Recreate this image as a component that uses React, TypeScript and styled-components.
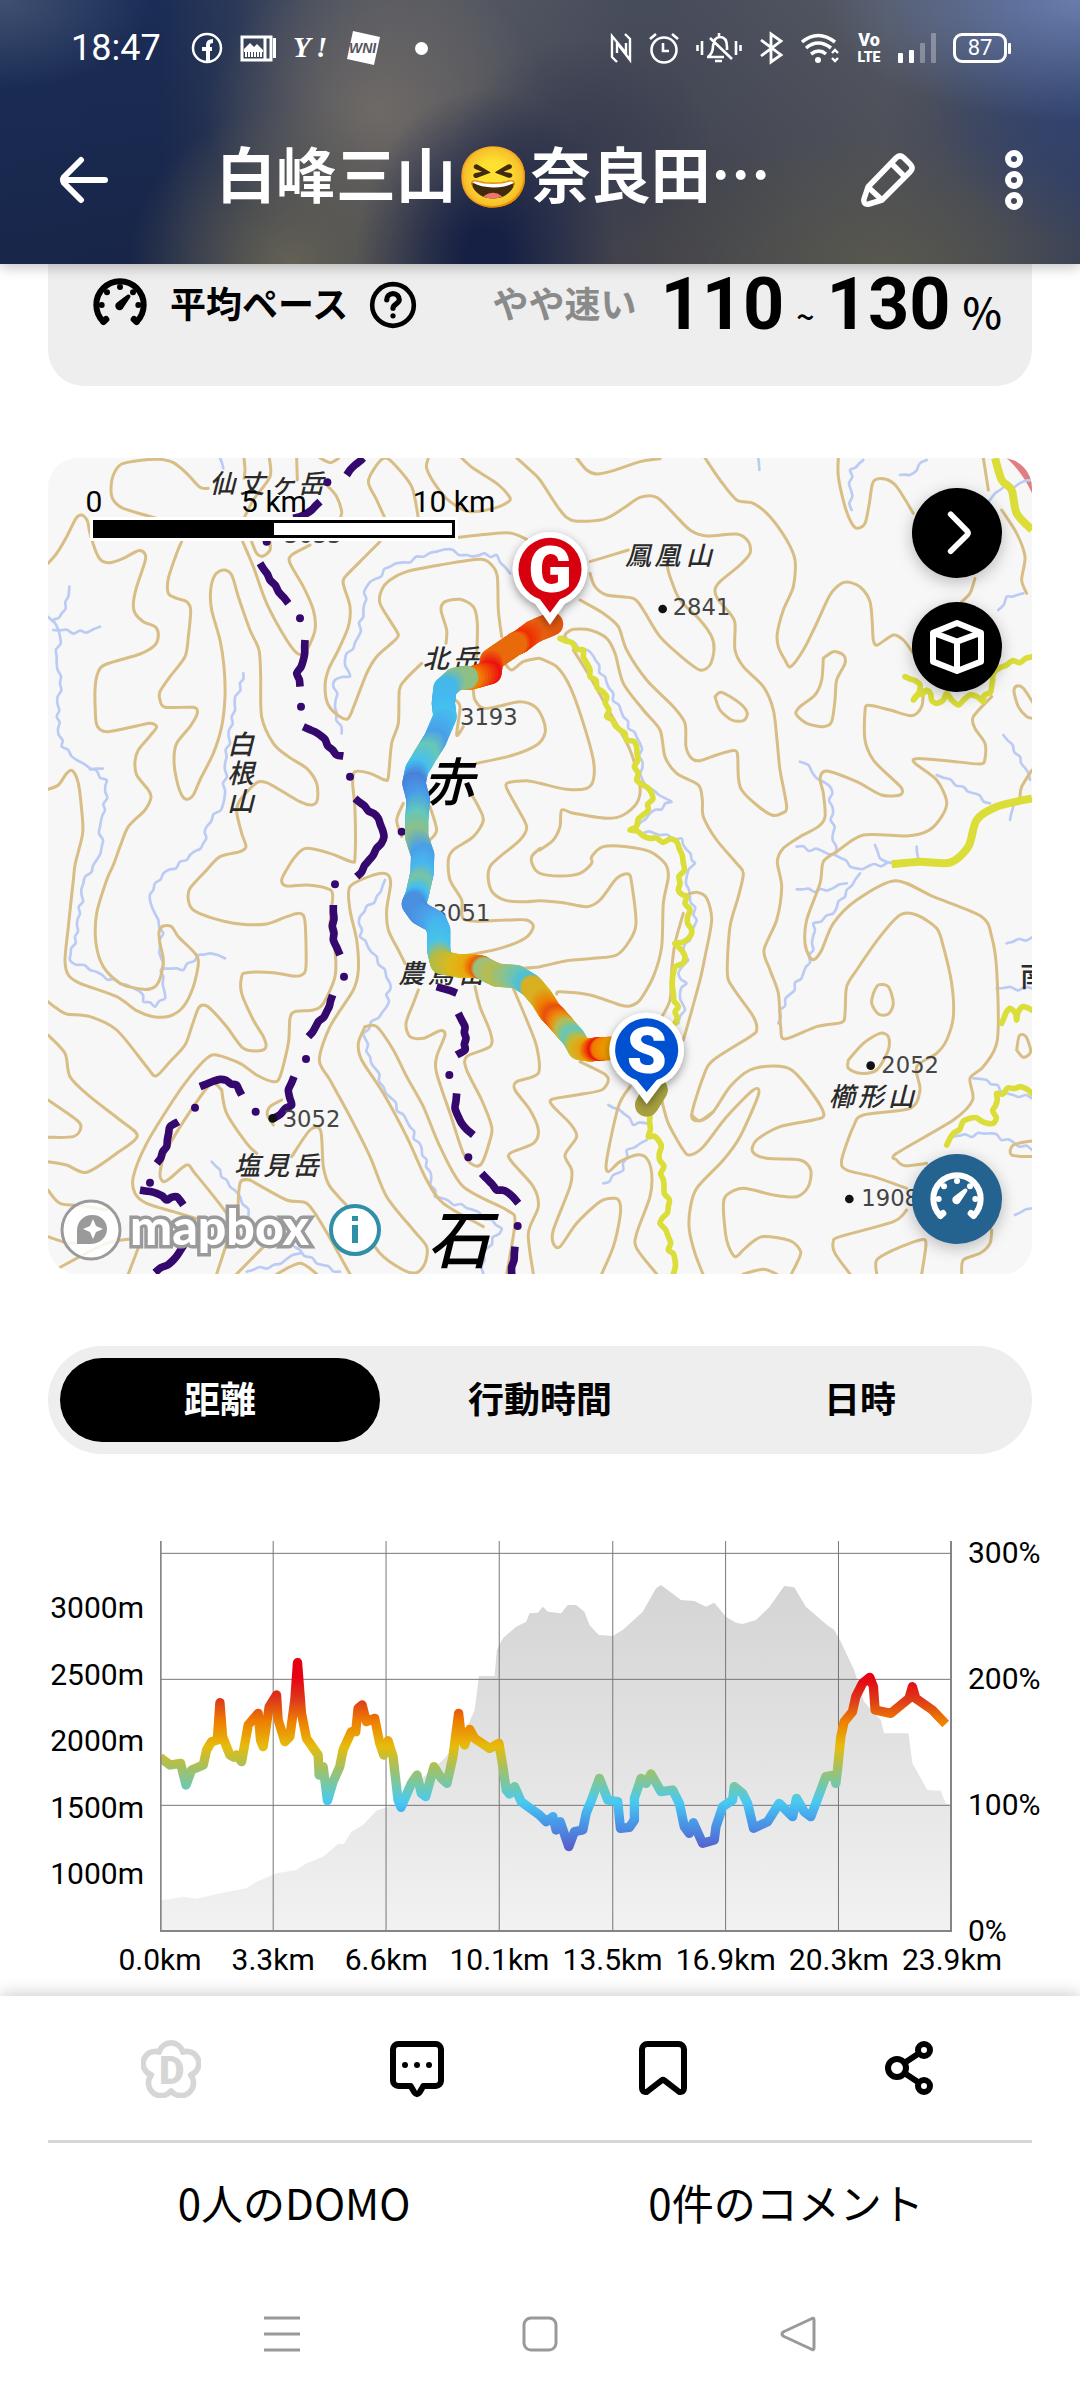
import React, { useState } from "react";
import styled, { createGlobalStyle } from "styled-components";

const JP = `"Noto Sans CJK JP", sans-serif`;
const LATIN = `Roboto, "Noto Sans CJK JP", sans-serif`;

const GlobalStyle = createGlobalStyle`
  * { box-sizing: border-box; }
  body { margin: 0; background: #fff; color: #000; font-family: ${JP}; }
  button { border: 0; padding: 0; background: none; color: inherit; font: inherit; cursor: pointer; }
  a { color: inherit; text-decoration: none; }
  svg { display: block; flex: none; }
`;

/* ---------- header ---------- */

const Header = styled.header`
  position: relative;
  z-index: 1;
  color: #fff;
  box-shadow: 0 2px 14px rgba(0, 0, 0, 0.28);
  background:
    radial-gradient(ellipse 24% 46% at 100% 0%, rgba(108, 128, 176, 0.95), transparent),
    radial-gradient(ellipse 14% 55% at 100% 38%, rgba(48, 66, 112, 0.95), transparent),
    radial-gradient(ellipse 12% 62% at 45% 96%, rgba(22, 32, 68, 1) 15%, transparent),
    radial-gradient(ellipse 12% 40% at 54% 55%, rgba(52, 56, 76, 0.8), transparent),
    radial-gradient(ellipse 15% 60% at 27% 100%, rgba(100, 97, 84, 1), transparent),
    radial-gradient(ellipse 16% 55% at 35% 42%, rgba(112, 107, 102, 0.95), transparent),
    radial-gradient(ellipse 14% 34% at 0% 0%, rgba(68, 84, 116, 0.9), transparent),
    radial-gradient(ellipse 18% 60% at 40% 0%, rgba(88, 90, 98, 0.9), transparent),
    radial-gradient(ellipse 24% 50% at 82% 100%, rgba(88, 88, 78, 0.95), transparent),
    radial-gradient(ellipse 16% 50% at 62% 100%, rgba(66, 66, 74, 0.9), transparent),
    linear-gradient(180deg, rgba(30, 60, 120, 0.1), rgba(10, 12, 30, 0.2)),
    linear-gradient(90deg, #1b2c54 0%, #1b2b52 15%, #343e56 24%, #5a5a60 36%, #4c4f5a 48%, #4c4e58 62%, #595a5e 82%, #3e4866 100%);
`;

const StatusBar = styled.div`
  height: 96px;
  padding: 0 69px 0 71px;
  display: flex;
  align-items: center;
  justify-content: space-between;
`;

const StatusGroup = styled.div`
  display: flex;
  align-items: center;
  gap: 17px;
  & > svg { overflow: visible; }
`;

const Clock = styled.time`
  font: 400 36px/42px ${LATIN};
  padding-right: 13px;
`;

const Dot = styled.span`
  width: 13px;
  height: 13px;
  margin-left: 18px;
  border-radius: 50%;
  background: #fff;
`;

const Battery = styled.div`
  display: flex;
  align-items: center;
  gap: 1px;
  &::after { content: ""; width: 3px; height: 11px; background: #fff; border-radius: 1px; }
`;

const BatteryLevel = styled.span`
  width: 54px;
  height: 30px;
  border: 3px solid #fff;
  border-radius: 9px;
  font: 400 22px/24px ${LATIN};
  text-align: center;
`;

const TitleBar = styled.div`
  height: 168px;
  padding: 0 30px 0 48px;
  display: flex;
  align-items: center;
`;

const IconButton = styled.button`
  width: 72px;
  height: 72px;
  flex: none;
  display: grid;
  place-items: center;
`;

const Title = styled.h1`
  flex: 1;
  min-width: 0;
  margin: 0 0 16px;
  padding-left: 96px;
  font: 700 60px/84px "Noto Sans CJK JP", "Noto Color Emoji", sans-serif;
  white-space: nowrap;
`;

const Actions = styled.div`
  display: flex;
  gap: 54px;
`;

/* ---------- body ---------- */

const Page = styled.main`
  padding: 0 48px;
`;

const PaceCard = styled.section`
  height: 122px;
  padding: 0 30px 40px 42px;
  border-radius: 0 0 36px 36px;
  background: #eee;
  display: flex;
  align-items: center;
  justify-content: space-between;
`;

const PaceName = styled.div`
  display: flex;
  align-items: center;
  gap: 20px;
`;

const PaceText = styled.span<{ $muted?: boolean }>`
  padding-bottom: 6px;
  font: 700 36px/54px ${JP};
  color: ${(p) => (p.$muted ? "#8a8a8a" : "#000")};
`;

const HelpButton = styled.button`
  display: grid;
  place-items: center;
`;

const PaceValue = styled.div`
  display: flex;
  align-items: center;
  gap: 24px;
`;

const PaceRange = styled.span`
  display: flex;
  align-items: baseline;
  gap: 12px;
  font: 700 72px/82px ${LATIN};
`;

const PaceUnit = styled.span<{ $size: number }>`
  font: 500 ${(p) => p.$size}px/54px ${JP};
`;

const MapCard = styled.section`
  position: relative;
  margin-top: 72px;
  border-radius: 30px;
  overflow: hidden;
  background: #f7f7f7;
`;

const MapDrawing = styled.svg`
  width: 100%;
  height: auto;
`;

const ScaleBar = styled.div`
  position: absolute;
  top: 59px;
  left: 42px;
  width: 368px;
  height: 24px;
  border: 3px solid #fff;
  background: #fff;
`;

const ScaleFill = styled.div`
  height: 18px;
  border: 3px solid #000;
  background: linear-gradient(90deg, #000 50%, #fff 50%);
`;

const ScaleLabels = styled.div`
  position: absolute;
  top: 26px;
  left: 0;
  width: 452px;
  display: flex;
  justify-content: space-between;
  font: 400 30px/36px ${LATIN};
`;

const ScaleLabel = styled.span`
  width: 92px;
  text-align: center;
`;

const MapButton = styled.button<{ $tone: string }>`
  width: 90px;
  height: 90px;
  border-radius: 50%;
  display: grid;
  place-items: center;
  color: #fff;
  background: ${(p) => p.$tone};
  box-shadow: 0 4px 16px rgba(0, 0, 0, 0.25);
`;

const MapControls = styled.div`
  position: absolute;
  top: 30px;
  right: 30px;
  bottom: 30px;
  display: flex;
  flex-direction: column;
  gap: 24px;
  & > :last-child { margin-top: auto; }
`;

const Attribution = styled.div`
  position: absolute;
  left: 12px;
  bottom: 13px;
  display: flex;
  align-items: center;
  gap: 8px;
`;

const MapboxName = styled.a`
  padding: 0 11px 8px 0;
  font: 900 50px/54px Lato, sans-serif;
  color: #fff;
  -webkit-text-stroke: 7px #9a9a9a;
  paint-order: stroke fill;
`;

const InfoButton = styled.button`
  display: grid;
  place-items: center;
`;

const Tabs = styled.div`
  margin-top: 72px;
  padding: 12px;
  border-radius: 54px;
  background: #eee;
  display: grid;
  grid-template-columns: repeat(3, 1fr);
`;

const Tab = styled.button<{ $active: boolean }>`
  height: 84px;
  padding-bottom: 7px;
  border-radius: 42px;
  font: 700 36px/54px ${JP};
  color: ${(p) => (p.$active ? "#fff" : "#000")};
  background: ${(p) => (p.$active ? "#000" : "transparent")};
`;

/* ---------- chart ---------- */

const Chart = styled.figure`
  margin: 87px 16px 19px 48px;
  font: 400 30px/24px ${LATIN};
`;

const ChartRow = styled.div`
  height: 402px;
  display: grid;
  grid-template-columns: 96px minmax(0, 1fr) 96px;
  gap: 16px;
`;

const Axis = styled.div<{ $left?: boolean }>`
  display: flex;
  flex-direction: column;
  justify-content: space-between;
  padding: ${(p) => (p.$left ? "55px 0 57px" : "0")};
  text-align: ${(p) => (p.$left ? "right" : "left")};
`;

const Plot = styled.svg`
  width: 100%;
  height: 391px;
`;

const Distances = styled.div`
  margin: 0 57px;
  display: flex;
  justify-content: space-between;
  line-height: 34px;
`;

const Distance = styled.span`
  width: 110px;
  text-align: center;
  white-space: nowrap;
`;

/* ---------- footer ---------- */

const Footer = styled.footer`
  position: relative;
  background: #fff;
  box-shadow: 0 -2px 16px rgba(0, 0, 0, 0.2);
`;

const Reactions = styled.div`
  height: 147px;
  margin: 0 48px;
  border-bottom: 3px solid #d6d6d6;
  display: grid;
  grid-template-columns: repeat(4, 1fr);
  place-items: center;
`;

const Counts = styled.div`
  height: 124px;
  margin: 0 48px;
  padding-bottom: 6px;
  display: grid;
  grid-template-columns: 1fr 1fr;
  place-items: center;
  font: 400 42px/60px ${JP};
`;

const SystemNav = styled.nav`
  height: 133px;
  padding: 0 153px;
  display: grid;
  grid-template-columns: repeat(3, 1fr);
  place-items: center;
`;

/* ---------- map data: three units per pixel, split in four tiles ---------- */

type Pt = [number, number];
const TILES: Pt[] = [[0, 0], [1500, 0], [0, 1230], [1500, 1230]];

const parse = (tile: number, s: string): Pt[] =>
  s.trim().split(/\s+/).map((p) => {
    const [x, y] = p.split(",").map(Number);
    return [x + TILES[tile][0], y + TILES[tile][1]];
  });

const join = (...parts: [number, string][]) => parts.flatMap(([t, s]) => parse(t, s));

const smooth = (pts: Pt[]) => {
  let d = `M${pts[0]}`;
  for (let i = 0; i < pts.length - 1; i++) {
    const a = pts[i - 1] || pts[i];
    const b = pts[i];
    const c = pts[i + 1];
    const e = pts[i + 2] || c;
    const k = 7;
    d += `C${b[0] + (c[0] - a[0]) / k},${b[1] + (c[1] - a[1]) / k} ${c[0] - (e[0] - b[0]) / k},${c[1] - (e[1] - b[1]) / k} ${c}`;
  }
  return d;
};

const wiggle = (pts: Pt[], amount: number) => {
  const out: Pt[] = [pts[0]];
  let n = 0;
  for (let i = 1; i < pts.length; i++) {
    const [x0, y0] = pts[i - 1];
    const [x1, y1] = pts[i];
    const len = Math.hypot(x1 - x0, y1 - y0);
    const steps = Math.max(1, Math.round(len / 20));
    for (let s = 1; s <= steps; s++) {
      n++;
      const o = s === steps ? 0 : Math.sin(n * 2.3 + i) * amount;
      const t = s / steps;
      out.push([
        Math.round(x0 + (x1 - x0) * t - ((y1 - y0) / len) * o),
        Math.round(y0 + (y1 - y0) * t + ((x1 - x0) / len) * o),
      ]);
    }
  }
  return smooth(out);
};

const CONTOURS: Pt[][] = [
  join(
    [0, "24,340 50,310 80,260 108,205 125,195 142,212 150,250 170,310 185,332 210,338 250,325 295,302 315,312 315,335 290,410 280,460 285,490 310,515 345,530 355,552 345,585 300,612 200,642 175,665 165,720 168,815 180,838 205,845 290,828 330,820 350,830 330,858 295,900 285,935 290,975 325,1020 333,1042 315,1080 265,1130 240,1190 220,1245"],
    [2, "200,60 170,160 168,250 190,320 240,370 310,388 345,380 362,350 370,300 360,250 357,215 370,198 395,200 415,230 465,280 475,310 460,380 430,440 390,468 340,470 290,452 230,410 120,370 85,345 75,300 85,200 100,60 106,10"],
    [0, "128,1150 125,1080 115,1000 97,962 80,970 55,1005 24,1018"]
  ),
  join([0, "505,115 480,112 440,70 400,38 360,28 310,30 245,42 220,75 213,120 220,150 250,175 350,205"]),
  join(
    [0, "425,275 410,310 385,385 385,430 410,445 440,455 452,480 445,560 435,620 390,680 360,725 360,750 375,772 460,772 472,790 450,830 410,880 402,930 410,990 425,1035 440,1048 460,1035 480,990 520,910 545,830 555,740 552,650 540,570 515,480 512,420 525,375 550,360 575,375 595,440 630,540 657,600 662,680 665,800 700,880 745,920 800,955 830,1000 832,1050 815,1065 780,1055 720,1020 680,998 650,998 600,1050 590,1085 605,1150 618,1190 600,1205 540,1220"],
    [2, "500,30 450,85 445,120 460,150 520,175 600,192 680,192 740,170 780,160 795,185 798,320 785,345 760,348 700,338 620,338 605,350 605,400 640,480 670,530 678,560 660,572 610,565 560,500 510,445 490,435 475,445 455,500 435,555 390,605 348,648 320,620 230,510 150,470 80,462 50,445 24,425"]
  ),
  join([0, "612,24 615,60 612,85"]),
  join([0, "688,24 690,80 640,150 612,205"]),
  join([0, "770,24 772,90"]),
  join([0, "608,275 640,350 680,460 740,570 775,612 800,600 825,540 820,480 790,410 750,340 755,315 810,285"]),
  join([0, "635,275 650,310 670,318 690,300 690,275"]),
  join([0, "865,110 890,140 905,185 900,205"]),
  join([0, "840,24 870,38 895,26"]),
  join([0, "1020,275 960,335 912,385 912,410 930,470 925,530 895,600 865,660 855,710 865,765 900,800 925,805 945,760 980,670 1010,620 1060,575 1075,555 1055,520 1020,460 1025,420 1050,390 1100,365 1200,345 1320,328 1355,345 1372,380 1375,480 1385,560"]),
  join([0, "1135,205 1115,110 1060,40 1035,24 1010,45 985,95 1010,150 1035,205"]),
  join([0, "1165,24 1160,55 1190,110 1230,155 1290,185 1360,175 1405,155 1408,140 1370,100 1300,55 1265,24"]),
  join([0, "1430,24 1470,60"], [1, "0,90 60,180 100,212 190,208 250,175 300,142 350,142 400,190 450,240 500,258 590,252 625,275 630,310 600,345 540,395 525,420 535,450 570,490 585,520 585,600 610,650 670,710 700,780 712,880 720,960 740,1070 725,1090 695,1095 650,1065 605,1020 595,980 592,910 575,902 530,915 480,932 455,925 438,890 435,820 400,770 320,690 260,600 235,530 190,490 120,450"]),
  join([0, "1255,262 1400,248 1460,268"]),
  join([0, "1310,620 1312,520 1300,470 1260,448 1215,455 1203,480 1220,540 1218,580"]),
  join([0, "1395,640 1415,660 1450,635 1495,625"]),
  join(
    [0, "1145,640 1095,690 1078,720 1075,820 1055,880 1045,980 1035,990 990,970 945,965 938,1000 945,1080 945,1220 935,1235 870,1210 800,1195 770,1215"],
    [2, "745,20 725,60 740,78 800,75 860,85 878,105 870,200 885,270 885,350 850,430 820,450 765,455 750,475 745,550 720,650 700,665 650,645 600,610 530,585 500,595 450,650 400,720 320,850 280,950 285,1000 320,1030 400,1055 500,1085"]
  ),
  join([0, "1300,720 1305,750 1330,775 1380,768 1440,755 1485,770 1510,810 1515,850 1490,885 1420,915 1310,940"]),
  join([0, "1240,745 1260,770"], [0, "1250,855 1270,830"]),
  join(
    [1, "0,625 50,650 90,710 130,820 160,930 160,990 140,1015 80,1018 0,1000"],
    [0, "1460,992 1405,998 1400,1015 1430,1070 1460,1130 1440,1170 1380,1220 1350,1250"],
    [2, "1345,60 1360,100 1400,122 1460,125"],
    [3, "0,122 70,128 140,140 180,120 230,55 265,42 275,70 288,190 270,240 230,285 160,295 80,302 0,320"],
    [2, "1440,325"]
  ),
  join([0, "1090,1060 1070,1110 1085,1160"]),
  join([0, "1170,1070 1190,1140 1170,1170"]),
  join([0, "1280,1010 1310,1060 1330,1110 1300,1160 1240,1200"], [2, "1225,0 1230,60 1265,120 1275,180 1400,180 1460,180 1480,200 1455,235 1380,265 1260,290"]),
  join([0, "1500,1195 1475,1220 1480,1250"], [3, "0,40 60,48 120,40 155,10"], [1, "155,1220 190,1190 260,1190 330,1205 375,1240"], [3, "385,50 370,130 365,260 340,350 300,420 270,438 240,435 150,405 60,395 50,402"]),
  join([1, "265,300 150,335"]),
  join([1, "150,370 165,410 200,435 280,445 310,480 360,560 430,625 480,660 510,645 522,600 515,560 480,510 420,450 390,380 380,340"]),
  join([1, "110,24 140,60 170,72 220,62 300,35 360,26"]),
  join([1, "495,24 540,90 590,150 640,160 690,200 740,270 765,330 760,410 730,480 712,550 715,590 735,630 752,650 790,600 830,520 870,435 905,400 930,397 965,415 990,455 997,520 1000,570 1012,585 1060,555 1090,570 1120,610"]),
  join([1, "895,24 895,80 915,170 935,220 952,235 975,220 988,160 1000,95 1035,87 1070,110 1120,190"]),
  join([1, "850,625 845,690 825,735 780,770 768,792 800,820 850,830 875,815 885,750 890,690 915,640 910,615 880,605 850,625"]),
  join([1, "525,740 545,727 600,760 622,790 610,812 575,810 540,780 525,740"]),
  join(
    [1, "1150,720 1145,770 1115,797 1050,780 985,766 975,785 975,870 1000,930 1050,980 1085,1015 1080,1035 1025,1035 950,995 860,963 840,985 850,1030 855,1100 835,1130 780,1160 730,1195 712,1235"],
    [3, "725,80 710,180 672,270 690,330 715,400 722,500 735,537 830,500 905,487 915,460 920,380 950,330 1020,230 1080,165 1130,165 1190,205 1210,260 1235,370 1240,470 1220,540 1190,580 1130,620 1140,690 1110,745 970,765 940,800 905,900 920,930 1000,950 1100,985"]
  ),
  join(
    [1, "1355,740 1300,800 1305,835 1335,880 1335,925 1320,942 1220,932 1130,926 1125,940 1190,990 1220,1055 1205,1100 1165,1142 1100,1158 970,1155 890,1205 850,1235"],
    [3, "840,70 800,180 795,250 810,292 825,297 845,270 880,190 950,120 1065,62 1180,110 1325,170 1355,230 1370,330 1372,540 1330,620 1290,655 1298,720 1240,780 1070,880 1070,900 1095,917 1160,910"]
  ),
  join([1, "1330,24 1345,120"]),
  join([1, "1385,180 1430,250 1455,320 1445,390 1460,430"]),
  join([1, "1305,385 1290,430 1265,455"]),
  join([1, "1480,760 1450,715 1430,708 1422,725 1435,770 1460,800 1480,805"]),
  join([1, "1476,960 1445,1010 1440,1040"]),
  join([1, "85,575 75,555 100,538 150,540 200,565 225,610 250,700 310,780 360,840 375,920 410,970 475,1005 487,1050 490,1100 530,1170 590,1240"], [3, "610,40 595,110 570,200 562,340 580,385 640,470 650,510 630,530 520,600 490,650 455,765 480,782 520,755"]),
  join([3, "365,720 385,790 430,870 450,885 490,860 560,770 640,690 655,705 600,830 550,900 470,985 450,1050 448,1110 465,1180 490,1245"]),
  join([3, "455,765 480,782 520,755 570,680 630,630 700,618 755,630 820,705 852,765 820,780 720,800 650,840 638,875 680,895 780,900 812,930 805,980 770,1010 700,1005 610,985 560,1005 550,1040 560,1140 585,1190 615,1165 665,1130 750,1142 782,1175 770,1210 755,1240"]),
  join([1, "100,600 150,680 200,770 270,900 300,1010 290,1060 250,1095 200,1105 100,1090 65,1080 60,1130 40,1170 0,1200"]),
  join([3, "440,105 470,97 500,115 515,180 495,290 480,360 450,470 430,540"]),
  join([3, "430,160 405,250 395,330 390,420 360,480"]),
  join([3, "270,680 235,740 200,900 205,935 240,905 290,885 320,895 335,940 330,1010 290,1120 290,1165 350,1242"]),
  join([3, "120,605 190,640 205,660 185,690 110,705 35,718 40,740 90,790 110,830 75,885 95,930 90,980 40,1110 40,1150 60,1160 110,1090 180,1025 225,1015 240,1030 240,1070 220,1160 185,1242"]),
  join([3, "1000,400 1015,375 1045,380 1060,430 1045,462 1015,462 995,430 1000,400"]),
  join([3, "925,600 970,550 1020,520 1045,530 1045,570 1010,630 960,640 925,625 925,600"]),
  join([3, "1100,1050 1060,1085 900,1130 880,1145 885,1180 930,1242"]),
  join([3, "1010,1242 1010,1200 1060,1170 1140,1140 1158,1150 1145,1242"]),
  join([3, "1355,1110 1350,1150 1320,1180 1270,1200 1265,1242"]),
  join([3, "1430,570 1438,527 1458,530 1472,575 1450,592 1430,570"]),
  join([3, "1480,842 1420,855 1415,885 1480,890"]),
  join([3, "610,1242 670,1228 710,1242"]),
  join([2, "24,525 75,580 90,650 150,710 240,780 292,828 230,880 140,937 80,915 24,905"]),
  join([2, "24,720 110,780 122,805 100,830 24,832"]),
  join([2, "24,990 60,1030 130,1038 200,1050"]),
  join([2, "1095,310 1075,270 1045,210 1040,150 1052,70 1040,42 1000,45 930,80 930,150 950,240 955,330 940,390 870,500 838,600 870,660 930,770 990,890 1040,1010 1120,1110 1160,1160 1155,1210 1130,1238 1090,1230 1020,1180 940,1060 870,980 850,920 842,812 810,810 755,890"]),
  join([2, "700,795 682,765 690,740 725,720"]),
  join([2, "545,690 560,760 620,850 650,880"]),
  join([2, "545,690 515,670 460,740 380,870 360,940 370,965 390,955 440,915 465,940 560,1060 600,1130"]),
  join([2, "630,960 740,1020 800,1030 850,1100 930,1242"]),
  join([2, "670,1150 600,1090 600,970 630,960"]),
  join([2, "975,500 1010,500 1060,570 1100,650 1150,740 1200,860 1270,980 1400,1050 1425,1085 1400,1242"]),
  join([2, "975,500 955,550 965,600 1030,700 1100,830 1160,960 1210,1030 1330,1100"]),
  join([2, "1135,390 1120,430 1098,490 1110,530 1150,535 1200,512 1215,525 1190,590 1190,640 1230,760 1270,880 1300,915 1325,910 1350,840 1355,800 1325,720 1280,630 1280,590 1350,560 1352,520 1320,440 1305,380"]),
  join([2, "1420,385 1460,480 1490,560 1495,640 1430,665 1425,690 1470,750 1495,810 1480,850 1410,880 1415,905 1480,980 1495,1040 1465,1120 1480,1242"]),
  join([2, "60,1222 200,1150 300,1135"]),
  join([2, "24,1130 90,1150 140,1140"]),
  join([2, "265,1242 300,1150"]),
  join([2, "530,1242 560,1150"]),
  join([2, "590,1242 700,1130"]),
  join([2, "710,1242 780,1210 830,1242"]),
];

const STREAMS: Pt[][] = [
  join([0, "88,410 85,440 65,490 40,510 60,560 50,620 60,700 50,800 65,890 110,930 150,955 200,990 195,1080 180,1130 185,1190 170,1230"], [2, "130,70 120,160 105,230 90,300 150,330 240,370 300,395 310,425 345,440 375,415 370,350 360,260 370,220 355,180 330,120 340,90 370,40"], [0, "440,1230 490,1180 500,1130 550,1060 560,920 575,800 600,700 610,670"]),
  join([0, "24,500 40,515"]),
  join([0, "40,540 140,548 180,530"]),
  join([0, "150,958 188,956"]),
  join([0, "540,24 550,55"]),
  join([2, "370,325 430,330 475,285 510,280 555,295"]),
  join([0, "1410,370 1370,315 1280,315 1215,298 1150,320 1050,350 980,410 970,480 955,560 915,630 930,680 885,690 890,790 905,850"]),
  join([2, "1035,60 1010,110 960,170 960,230 1010,290 1050,370 1040,440 970,520 990,590 1030,680 1110,800 1160,900 1185,1010 1300,1050 1385,1105 1330,1180 1330,1240"]),
  join([2, "515,905 560,960 600,1010 640,1090 700,1100 780,1170 830,1210 900,1235"]),
  join([2, "620,1235 700,1215 780,1180"]),
  join([1, "655,24 658,60"]),
  join([1, "970,30 930,60 935,180"]),
  join([1, "1080,75 1110,75 1160,30"]),
  join([1, "1340,160 1380,120 1476,90"]),
  join([1, "1450,430 1400,440 1375,480"]),
  join([1, "66,560 158,615 208,715 250,800 300,880 308,990 340,1020 395,1055 330,1090 290,1140 360,1155 425,1165 455,1230"], [3, "465,10 440,50 450,110 470,180 450,240 430,270 445,300 415,340 440,370 420,400 435,450 415,490"]),
  join([1, "780,935 805,945 830,985 870,1010 885,1210 770,1190"]),
  join([1, "885,1215 950,1255"], [3, "1040,10"]),
  join([1, "1190,975 1270,1010 1350,1060"]),
  join([1, "1410,1110 1420,1070"]),
  join([1, "1390,855 1440,920 1470,990"]),
  join([1, "1005,1185 1020,1225 1060,1240"]),
  join([1, "1130,1190 1130,1240"]),
  join([3, "770,88 860,92 920,70"]),
  join([3, "960,40 920,90 880,160 820,190 820,270 790,340 720,450 715,490"]),
  join([3, "1400,250 1476,232"]),
  join([3, "1370,385 1476,385"]),
  join([3, "1300,655 1340,660 1400,700 1476,715"]),
  join([3, "1240,830 1350,820 1476,870"]),
  join([3, "1425,1065 1476,1045"]),
  join([3, "205,735 250,760 280,795 320,790"]),
  join([3, "320,840 260,870 250,930 190,970"]),
];

const ROADS: Pt[][] = [
  join([1, "60,565 130,600 150,680 200,740 200,800 240,840 290,890 290,990 335,1030 325,1080 270,1140 330,1165 410,1175 430,1240"], [3, "415,90 440,110 450,230 405,250 435,290 400,340 400,400 415,440 405,490"]),
  join([3, "330,765 325,830 355,840 370,960 385,1040 360,1090 385,1130 385,1170 405,1200 400,1242"]),
  join([1, "1095,680 1140,705 1120,750 1160,720 1190,760 1220,730 1255,765 1290,735 1330,755 1355,710 1360,670 1400,645 1476,620"]),
  join([3, "1385,490 1410,445 1430,480 1450,440 1476,450"]),
  join([3, "1220,855 1240,820 1290,775 1360,790 1370,700 1440,680 1476,700"]),
];

const HIGHWAYS: Pt[][] = [
  join([1, "1365,24 1385,90 1415,120 1430,190 1476,240"]),
  join([1, "1055,1243 1140,1235 1230,1238 1285,1190 1310,1110 1370,1070 1476,1045"]),
];

const BORDERS: Pt[][] = [
  join([0, "970,24 945,45 920,75"]),
  join([0, "840,155 800,190 760,205"]),
  join([0, "660,340 690,390 745,460"]),
  join([0, "795,570 790,630 770,670 780,710"]),
  join([0, "790,830 840,855 890,915 910,918"]),
  join([0, "945,1045 1015,1105 1032,1160 1000,1215"], [2, "950,50"]),
  join([2, "880,135 880,240 900,285"]),
  join([2, "878,405 860,455 805,530"]),
  join([2, "762,650 745,690 755,735 700,775"]),
  join([2, "480,680 540,658 590,675 605,705"]),
  join([2, "415,785 390,800 380,860 350,910"]),
  join([2, "300,990 350,1000 380,1020 410,1010 430,1035"]),
  join([2, "435,1150 400,1200 345,1238"]),
  join([2, "1190,380 1250,400"]),
  join([2, "1255,460 1275,500 1275,570 1250,585"]),
  join([2, "1250,700 1245,745 1265,790 1300,825"]),
  join([2, "1325,940 1370,990 1400,995 1435,1030"]),
  join([2, "1425,1160 1415,1242"]),
];

const BORDER_DOTS = [
  ...parse(0, "862,97 680,275 780,505 783,770 930,980 1085,1145"),
  ...parse(2, "885,73 912,350 798,597 647,755 465,743 330,968 1228,645 1285,892 1433,1098"),
];

const TRACK: [number, number, string][] = [
  [1535, 522, "e2560f"], [1480, 545, "e85f10"], [1440, 575, "f02a00"], [1425, 582, "e96a0b"], [1355, 630, "e96a0b"],
  [1350, 668, "ee1111"], [1290, 685, "f08000"], [1282, 684, "f08000"], [1278, 682, "8fbf85"], [1245, 688, "8fbf85"],
  [1215, 715, "45b8e8"], [1210, 760, "45b8f0"], [1215, 800, "45c0ee"], [1185, 870, "4a9ee8"], [1160, 910, "68c8b8"],
  [1130, 960, "45c0ee"], [1122, 1000, "4a80dc"], [1135, 1050, "489be8"], [1130, 1110, "62c8bc"], [1130, 1160, "8cc08a"],
  [1148, 1215, "4a9fe8"], [1146, 1270, "48b8ee"], [1138, 1305, "7cc4a0"], [1130, 1340, "45c0ee"], [1120, 1362, "4a8fe0"],
  [1140, 1390, "4a8fe0"], [1185, 1415, "4aa5ec"], [1196, 1440, "45b5ee"], [1196, 1500, "48c4e8"], [1205, 1538, "b4bb45"],
  [1260, 1548, "e0b818"], [1300, 1548, "e8a810"], [1325, 1552, "ef5a00"], [1335, 1558, "98c080"], [1370, 1575, "b8bc50"],
  [1430, 1580, "7cc4a0"], [1470, 1605, "45c0e0"], [1480, 1615, "d8b020"], [1505, 1645, "d8b020"], [1530, 1685, "f07800"], [1545, 1700, "e85010"],
  [1565, 1722, "f08a08"], [1580, 1740, "b8bc50"], [1602, 1765, "60c8c0"], [1618, 1795, "d0b828"], [1650, 1800, "e8a010"], [1664, 1798, "f06000"], [1680, 1797, "e81010"], [1690, 1796, "ef7a00"],
  [1720, 1795, "ef9a00"], [1800, 1810, "d0b020"], [1848, 1920, "a3a542"], [1820, 1965, "a8a040"],
];

const mix = (a: string, b: string, t: number) =>
  "#" + [0, 2, 4].map((i) => {
    const v = parseInt(a.slice(i, i + 2), 16) * (1 - t) + parseInt(b.slice(i, i + 2), 16) * t;
    return Math.round(v).toString(16).padStart(2, "0");
  }).join("");

const trackPieces = TRACK.slice(1).flatMap(([x1, y1, c1], i) => {
  const [x0, y0, c0] = TRACK[i];
  return Array.from({ length: 6 }, (_, s) => ({
    d: `M${x0 + ((x1 - x0) * s) / 6},${y0 + ((y1 - y0) * s) / 6}L${x0 + ((x1 - x0) * (s + 1)) / 6},${y0 + ((y1 - y0) * (s + 1)) / 6}`,
    color: mix(c0, c1, s / 6),
  }));
});

const PEAKS: { x: string; y: number; name: string; size?: number }[] = [
  { x: "508 597 690 775", y: 128, name: "仙丈ヶ岳" },
  { x: "1148 1238", y: 655, name: "北岳" },
  { x: "1755 1843 1938", y: 344, name: "鳳凰山" },
  { x: "1075 1163 1255", y: 1600, name: "農鳥岳" },
  { x: "582 670 758", y: 2174, name: "塩見岳" },
  { x: "2366 2454 2544", y: 1968, name: "櫛形山" },
  { x: "1146", y: 1052, name: "赤", size: 156 },
  { x: "1162", y: 2440, name: "石", size: 190 },
];

const HEIGHTS: [number, number, string][] = [
  [732, 280, "3033"], [1260, 824, "3193"], [1898, 496, "2841"], [1178, 1412, "3051"],
  [728, 2030, "3052"], [2524, 1868, "2052"], [2464, 2268, "1908"],
];

const SPOTS: Pt[] = [[1868, 477], [698, 2005], [2492, 1847], [2428, 2247]];

const Pin = ({ x, y, tip, color, letter }: { x: number; y: number; tip: number; color: string; letter: string }) => (
  <g>
    <path
      d={`M${x} ${y - 112}a112 112 0 0 1 44 215L${x} ${tip}L${x - 44} ${y + 103}A112 112 0 0 1 ${x} ${y - 112}Z`}
      fill="#fff"
      filter="url(#pinShadow)"
    />
    <path d={`M${x} ${y - 95}a95 95 0 0 1 30 185L${x} ${tip - 36}L${x - 30} ${y + 90}A95 95 0 0 1 ${x} ${y - 95}Z`} fill={color} />
    <text x={x} y={y + 69} textAnchor="middle" fill="#fff" fontFamily="Roboto, sans-serif" fontWeight="900" fontSize="192">
      {letter}
    </text>
  </g>
);

const MapView = () => (
  <MapDrawing viewBox="24 24 2952 2448" role="img" aria-label="白峰三山の地図" strokeLinecap="round" strokeLinejoin="round">
    <defs>
      <filter id="pinShadow" x="-40%" y="-40%" width="180%" height="180%">
        <feDropShadow dx="0" dy="10" stdDeviation="14" floodOpacity="0.4" />
      </filter>
    </defs>
    <rect x="24" y="24" width="2952" height="2448" fill="#f7f7f7" />
    <path d="M2900 24H2976V130Q2950 70 2900 24Z" fill="#e07f82" />
    <g fill="none" stroke="#bccbf4" strokeWidth="8">
      {STREAMS.map((s, i) => <path key={i} d={wiggle(s, 6)} />)}
    </g>
    <g fill="none" stroke="#d8bd84" strokeWidth="9">
      {CONTOURS.map((c, i) => <path key={i} d={smooth(c)} />)}
    </g>
    <g fill="none" stroke="#dbde38" strokeWidth="17">
      {ROADS.map((r, i) => <path key={i} d={wiggle(r, 7)} />)}
    </g>
    <g fill="none" stroke="#dbde38" strokeWidth="24" strokeLinecap="butt">
      {HIGHWAYS.map((r, i) => <path key={i} d={smooth(r)} />)}
    </g>
    <g fill="none" stroke="#35086e" strokeWidth="23" strokeLinecap="butt">
      {BORDERS.map((b, i) => <path key={i} d={wiggle(b, 3)} />)}
    </g>
    {BORDER_DOTS.map(([x, y], i) => <circle key={i} cx={x} cy={y} r="12" fill="#35086e" />)}
    <g fontFamily="Noto Sans CJK JP, sans-serif" fontStyle="italic" fontWeight="500" fill="#2a2a2a">
      {PEAKS.map((p) => (
        <text key={p.name} x={p.x} y={p.y} fontSize={p.size || 78} fill={p.size ? "#000" : "#2a2a2a"}>{p.name}</text>
      ))}
      <text x="562 562 562" y="912 998 1084" fontSize="80">白根山</text>
      <text x="2940" y="1612" fontSize="84" fontStyle="normal">南</text>
    </g>
    <g fontFamily="DejaVu Sans, sans-serif" fontSize="68" fill="#444">
      {HEIGHTS.map(([x, y, h]) => <text key={h} x={x} y={y}>{h}</text>)}
    </g>
    {SPOTS.map(([x, y]) => <circle key={x} cx={x} cy={y} r="13" fill="#111" />)}
    <g fill="none" strokeWidth="70">
      {trackPieces.map((p, i) => <path key={i} d={p.d} stroke={p.color} />)}
    </g>
    <Pin x={1530} y={358} tip={524} color="#d7000f" letter="G" />
    <Pin x={1820} y={1800} tip={1962} color="#0050d2" letter="S" />
  </MapDrawing>
);

/* ---------- chart data ---------- */

const pace =
  "390,712 420,735 452,730 468,795 485,750 520,735 530,690 545,665 562,660 570,548 578,650 600,705 612,712 620,705 635,725 655,615 685,580 692,660 700,680 718,560 740,525 745,600 765,665 780,650 795,540 803,428 815,580 830,655 865,705 868,765 880,740 893,842 910,785 930,740 940,690 965,635 978,635 985,565 997,555 1010,605 1035,595 1050,670 1062,705 1075,662 1090,710 1105,840 1114,862 1145,790 1162,765 1175,820 1188,830 1213,740 1235,775 1252,790 1270,710 1287,580 1295,650 1305,675 1320,628 1335,655 1380,685 1408,670 1420,740 1430,810 1440,822 1455,800 1475,845 1530,885 1550,905 1570,890 1580,930 1592,905 1618,980 1635,935 1660,930 1670,880 1690,830 1710,775 1735,840 1765,845 1773,925 1800,922 1815,900 1815,835 1835,775 1850,790 1865,762 1895,815 1930,810 1950,850 1965,920 1980,940 1992,908 2020,970 2055,960 2060,920 2080,860 2110,840 2115,800 2140,820 2155,850 2173,925 2215,905 2250,850 2290,890 2302,835 2325,875 2345,890 2360,850 2390,770 2415,765 2420,790 2425,750 2435,650 2445,605 2470,575 2480,530 2500,490 2522,472 2533,500 2538,570 2585,580 2640,535 2650,500 2660,535 2710,570 2750,612";

const elevation =
  "390,1236 390,1140 420,1138 460,1130 500,1136 560,1122 650,1105 680,1085 740,1060 800,1050 830,1030 880,1010 925,972 942,972 965,935 1000,915 1040,872 1075,860 1110,850 1160,790 1240,720 1300,650 1335,570 1348,468 1395,468 1402,390 1420,355 1460,320 1490,305 1500,280 1525,278 1540,260 1555,275 1595,280 1615,255 1640,255 1665,275 1680,315 1708,345 1750,348 1780,330 1840,275 1880,205 1895,195 1955,240 1995,243 2030,260 2055,248 2090,290 2120,308 2140,312 2180,300 2220,262 2265,198 2295,202 2330,260 2390,312 2415,330 2435,365 2475,450 2505,545 2555,600 2565,640 2638,640 2650,730 2695,810 2735,812 2750,850 2769,855 2769,1236";

const STOPS: [number, string][] = [
  [470, "#e60012"], [540, "#dd3a1a"], [605, "#ee8000"], [680, "#e6bc0c"], [740, "#a8c05c"],
  [800, "#70c8b0"], [845, "#48caf2"], [905, "#489ae8"], [985, "#5660cc"],
];

const PaceChart = () => (
  <Plot viewBox="390 63 2379 1173" preserveAspectRatio="none" role="img" aria-label="ペースと標高のグラフ">
    <defs>
      <linearGradient id="pace" gradientUnits="userSpaceOnUse" x1="0" y1="470" x2="0" y2="985">
        {STOPS.map(([y, c]) => <stop key={y} offset={(y - 470) / 515} stopColor={c} />)}
      </linearGradient>
      <linearGradient id="hill" x1="0" y1="0" x2="0" y2="1">
        <stop offset="0" stopColor="#d4d4d4" />
        <stop offset="1" stopColor="#f2f2f2" />
      </linearGradient>
    </defs>
    <polygon points={elevation} fill="url(#hill)" />
    <g stroke="#757575" strokeWidth="3">
      {[100, 478, 856].map((y) => <line key={y} x1="390" x2="2769" y1={y} y2={y} />)}
      {[730, 1069, 1409, 1750, 2089, 2428].map((x) => <line key={x} x1={x} x2={x} y1="63" y2="1236" />)}
    </g>
    <path d={`M${pace.split(" ").join("L")}`} fill="none" stroke="url(#pace)" strokeWidth="28" strokeLinejoin="round" />
    <path d="M392 63V1233H2766V63" fill="none" stroke="#858585" strokeWidth="6" />
  </Plot>
);

/* ---------- icons ---------- */

const Gauge = () => (
  <svg width="60" height="60" viewBox="1161 927 180 180" fill="none" stroke="currentColor" strokeWidth="18" strokeLinecap="round">
    <path d="M1201 1067A71 71 0 1 1 1301 1067" />
    <path d="M1201 1067l8-7M1301 1067l-8-7" strokeWidth="20" />
    <g fill="currentColor" stroke="none">
      <circle cx="1196" cy="1017" r="9" />
      <circle cx="1212" cy="979" r="9" />
      <circle cx="1251" cy="963" r="9" />
      <circle cx="1290" cy="979" r="9" />
      <circle cx="1306" cy="1017" r="9" />
      <path d="M1241 1010L1273 986Q1284 984 1282 994L1262 1024A13 13 0 1 1 1241 1010Z" />
    </g>
  </svg>
);

const tabs = ["距離", "行動時間", "日時"];

export default function App() {
  const [active, setActive] = useState(0);
  return (
    <div lang="ja">
      <GlobalStyle />
      <Header>
        <StatusBar>
          <StatusGroup>
            <Clock>18:47</Clock>
            <svg width="32" height="32" viewBox="0 0 32 32" fill="none" stroke="#fff">
              <circle cx="16" cy="16" r="14" strokeWidth="2.5" />
              <path d="M17 29V13q0-4 5-4M11 17h10" strokeWidth="4" />
            </svg>
            <svg width="36" height="28" viewBox="0 0 36 28">
              <path d="M2 3h29v23H2zM25 3v23" fill="none" stroke="#fff" strokeWidth="3" />
              <path d="M33 4h3v20h-3zM4 15l6-6 4 4 3-3 6 6v2H4z" fill="#fff" />
              <path d="M6 18v5M9 18v5M12 18v5M15 18v5M18 18v5M21 18v5" stroke="#fff" strokeWidth="2" />
            </svg>
            <svg width="37" height="40" viewBox="0 0 37 40" fill="#fff" fontFamily="Liberation Serif, serif" fontStyle="italic" fontWeight="700">
              <text x="0" y="29" fontSize="29">Y</text>
              <text x="23" y="29" fontSize="29">!</text>
            </svg>
            <svg width="33" height="34" viewBox="0 0 33 34">
              <path d="M6 0L33 6 27 34 0 28z" fill="#fff" />
              <text x="2" y="22" fill="#55555c" fontFamily="Liberation Sans, sans-serif" fontStyle="italic" fontWeight="700" fontSize="14">WNI</text>
            </svg>
            <Dot />
          </StatusGroup>
          <StatusGroup>
            <svg width="22" height="30" viewBox="0 0 22 30" fill="none" stroke="#fff" strokeWidth="2.400">
              <path d="M7 29L2 24V3L16 20V10M15 1l5 5V27L7 10V20" />
            </svg>
            <svg width="30" height="32" viewBox="0 0 30 32" fill="none" stroke="#fff" strokeWidth="2.6">
              <circle cx="15" cy="18" r="12.5" />
              <path d="M14 11v8h6M1 7l6-5M29 7l-6-5" />
            </svg>
            <svg width="46" height="32" viewBox="0 0 46 32" fill="none" stroke="#fff" strokeWidth="2.6">
              <path d="M1.500 13v6M6 9v14M40 9v14M44.500 13v6M23 1v4M12 25q5-4 5-11 1-9 7-9 7 0 7 10v3M11 25h17M14 6L36 27M19 29h7" />
            </svg>
            <svg width="24" height="32" viewBox="0 0 24 32" fill="none" stroke="#fff" strokeWidth="2.800">
              <path d="M2 8L22 23 12 30V2L22 9 2 24" />
            </svg>
            <svg width="40" height="32" viewBox="0 0 40 32" fill="none" stroke="#fff">
              <path d="M2 10q16-13 33 0M6 16q12-10 25 0M11 22q8-6 15 0" strokeWidth="3.500" />
              <circle cx="18" cy="28" r="3" fill="#fff" stroke="none" />
              <path d="M32 21l3-3 3 3M32 26l3 3 3-3" strokeWidth="2.400" />
            </svg>
            <svg width="24" height="40" viewBox="0 0 24 40" fill="#fff" fontFamily="Roboto, sans-serif" fontWeight="900">
              <text x="12" y="18" textAnchor="middle" fontSize="18">Vo</text>
              <text x="12" y="34" textAnchor="middle" fontSize="14">LTE</text>
            </svg>
            <svg width="38" height="32" viewBox="0 0 38 32" fill="#fff">
              <rect x="0" y="21" width="5" height="10" rx="1" />
              <rect x="11" y="18" width="5" height="13" rx="1" />
              <rect x="22" y="11" width="5" height="20" rx="1" opacity="0.3" />
              <rect x="33" y="1" width="5" height="30" rx="1" opacity="0.3" />
            </svg>
            <Battery><BatteryLevel>87</BatteryLevel></Battery>
          </StatusGroup>
        </StatusBar>
        <TitleBar>
          <IconButton aria-label="戻る">
            <svg width="50" height="50" viewBox="0 0 50 50" fill="none" stroke="#fff" strokeWidth="6" strokeLinecap="round" strokeLinejoin="round">
              <path d="M46 25H5M22 5L5 22q-2 3 0 6L22 45" />
            </svg>
          </IconButton>
          <Title>白峰三山😆奈良田…</Title>
          <Actions>
            <IconButton aria-label="編集">
              <svg width="56" height="56" viewBox="0 0 56 56" fill="none" stroke="#fff" strokeWidth="5.500" strokeLinejoin="round">
                <path d="M36 6q4-4 8 0l6 6q4 4 0 8L22 48 9 52q-6 1-5-5L8 35z" />
                <path d="M31 11L45 25M8 35L22 48" />
              </svg>
            </IconButton>
            <IconButton aria-label="メニュー">
              <svg width="20" height="62" viewBox="0 0 20 62" fill="none" stroke="#fff" strokeWidth="6">
                <circle cx="10" cy="10" r="6" />
                <circle cx="10" cy="31" r="6" />
                <circle cx="10" cy="52" r="6" />
              </svg>
            </IconButton>
          </Actions>
        </TitleBar>
      </Header>

      <Page>
        <PaceCard>
          <PaceName>
            <Gauge />
            <PaceText>平均ペース</PaceText>
            <HelpButton aria-label="平均ペースとは">
              <svg width="50" height="50" viewBox="0 0 24 24" fill="none" stroke="currentColor" strokeWidth="2.200" strokeLinecap="round" strokeLinejoin="round">
                <circle cx="12" cy="12" r="10" />
                <path d="M9 9.500a3 3 0 0 1 6 0c0 2-3 2-3 4M12 17.200h.01" strokeWidth="2.500" />
              </svg>
            </HelpButton>
          </PaceName>
          <PaceValue>
            <PaceText $muted>やや速い</PaceText>
            <PaceRange>
              110<PaceUnit $size={32}>~</PaceUnit>130<PaceUnit $size={42}>%</PaceUnit>
            </PaceRange>
          </PaceValue>
        </PaceCard>

        <MapCard>
          <MapView />
          <ScaleLabels>
            <ScaleLabel>0</ScaleLabel>
            <ScaleLabel>5 km</ScaleLabel>
            <ScaleLabel>10 km</ScaleLabel>
          </ScaleLabels>
          <ScaleBar><ScaleFill /></ScaleBar>
          <MapControls>
            <MapButton $tone="#000" aria-label="次へ">
              <svg width="60" height="60" viewBox="1161 159 180 180" fill="none" stroke="currentColor" strokeWidth="17" strokeLinecap="round" strokeLinejoin="round">
                <path d="M1232 193L1282 244q4 5 0 10L1232 304" />
              </svg>
            </MapButton>
            <MapButton $tone="#000" aria-label="3D表示">
              <svg width="60" height="60" viewBox="1161 501 180 180" fill="none" stroke="currentColor" strokeWidth="18" strokeLinejoin="round">
                <path d="M1251 519L1323 548V635L1251 663 1179 635V548ZM1179 548L1251 575 1323 548M1251 575V663" />
              </svg>
            </MapButton>
            <MapButton $tone="#24628f" aria-label="ペース表示"><Gauge /></MapButton>
          </MapControls>
          <Attribution>
            <svg width="62" height="62" viewBox="0 0 62 62">
              <circle cx="31" cy="31" r="29" fill="#fff" fillOpacity="0.85" stroke="#9a9a9a" strokeWidth="3" />
              <path d="M17 45V32C17 22 24 16 32 16a14 14 0 0 1 15 14C47 39 39 45 30 45Z" fill="#9a9a9a" />
              <path d="M33 20l3 7 7 3-7 3-3 7-3-7-7-3 7-3z" fill="#fff" />
            </svg>
            <MapboxName href="#mapbox">mapbox</MapboxName>
            <InfoButton aria-label="地図の情報">
              <svg width="54" height="54" viewBox="0 0 54 54">
                <circle cx="27" cy="27" r="24" fill="#fff" stroke="#2f8fa8" strokeWidth="4" />
                <path d="M24 13h6v5h-6zM24 22h6v18h-6z" fill="#2f8fa8" />
              </svg>
            </InfoButton>
          </Attribution>
        </MapCard>

        <Tabs role="tablist">
          {tabs.map((t, i) => (
            <Tab key={t} role="tab" aria-selected={i === active} $active={i === active} onClick={() => setActive(i)}>{t}</Tab>
          ))}
        </Tabs>
      </Page>

      <Chart>
        <ChartRow>
          <Axis $left>
            {["3000m", "2500m", "2000m", "1500m", "1000m"].map((v) => <span key={v}>{v}</span>)}
          </Axis>
          <PaceChart />
          <Axis>
            {["300%", "200%", "100%", "0%"].map((v) => <span key={v}>{v}</span>)}
          </Axis>
        </ChartRow>
        <Distances>
          {["0.0km", "3.3km", "6.6km", "10.1km", "13.5km", "16.9km", "20.3km", "23.9km"].map((v) => <Distance key={v}>{v}</Distance>)}
        </Distances>
      </Chart>

      <Footer>
        <Reactions>
          <IconButton aria-label="DOMO">
            <svg width="60" height="60" viewBox="63 84 180 180" fill="none" stroke="#d6d6d6" strokeWidth="17" strokeLinejoin="round">
              <path d="M118 126A36 36 0 0 1 188 126A36 36 0 0 1 212 195A36 36 0 0 1 153 243A36 36 0 0 1 94 195A36 36 0 0 1 118 126Z" />
              <text x="155" y="222" textAnchor="middle" fill="#d6d6d6" stroke="none" fontFamily="Roboto, sans-serif" fontWeight="900" fontSize="118">D</text>
            </svg>
          </IconButton>
          <IconButton aria-label="コメントする">
            <svg width="60" height="60" viewBox="801 84 180 180" fill="none" stroke="#000" strokeWidth="18" strokeLinejoin="round">
              <path d="M835 102H947a16 16 0 0 1 16 16V212a16 16 0 0 1-16 16H910L899 247q-8 11-16 0L872 228H835a16 16 0 0 1-16-16V118a16 16 0 0 1 16-16Z" />
              <g fill="#000" stroke="none">
                <circle cx="855" cy="165" r="9" />
                <circle cx="891" cy="165" r="9" />
                <circle cx="927" cy="165" r="9" />
              </g>
            </svg>
          </IconButton>
          <IconButton aria-label="ブックマーク">
            <svg width="60" height="60" viewBox="99 84 180 180" fill="none" stroke="#000" strokeWidth="18" strokeLinejoin="round">
              <path d="M142 102H236a16 16 0 0 1 16 16V234q0 14-14 12L193 211q-4-3-8 0L140 246q-14 2-14-12V118a16 16 0 0 1 16-16Z" />
            </svg>
          </IconButton>
          <IconButton aria-label="共有">
            <svg width="60" height="60" viewBox="837 84 180 180" fill="none" stroke="#000" strokeWidth="18">
              <circle cx="891" cy="174" r="27" />
              <circle cx="972" cy="120" r="18" />
              <circle cx="972" cy="228" r="18" />
              <path d="M913 159L957 130M913 189L957 218" />
            </svg>
          </IconButton>
        </Reactions>
        <Counts>
          <a href="#domo">0人のDOMO</a>
          <a href="#comments">0件のコメント</a>
        </Counts>
        <SystemNav>
          <IconButton aria-label="履歴">
            <svg width="36" height="36" viewBox="0 0 36 36" stroke="#999" strokeWidth="3">
              <path d="M0 2H36M0 18H36M0 34H36" />
            </svg>
          </IconButton>
          <IconButton aria-label="ホーム">
            <svg width="36" height="36" viewBox="0 0 36 36" fill="none" stroke="#999" strokeWidth="3">
              <rect x="2" y="2" width="32" height="32" rx="7" />
            </svg>
          </IconButton>
          <IconButton aria-label="戻る">
            <svg width="36" height="36" viewBox="0 0 36 36" fill="none" stroke="#999" strokeWidth="3" strokeLinejoin="round">
              <path d="M34 4V32q0 3-3 1L3 20q-2-2 0-4L31 3q3-2 3 1Z" />
            </svg>
          </IconButton>
        </SystemNav>
      </Footer>
    </div>
  );
}
